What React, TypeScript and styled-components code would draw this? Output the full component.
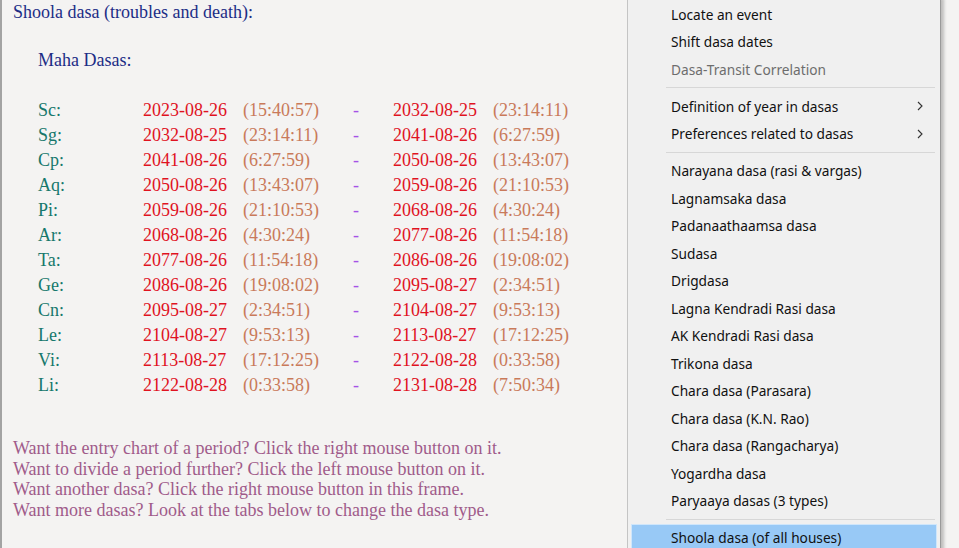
import * as React from "react";
import styled, { createGlobalStyle } from "styled-components";

const GlobalStyle = createGlobalStyle`
  html, body {
    margin: 0;
    padding: 0;
    width: 959px;
    height: 548px;
    overflow: hidden;
    background: #f4f3f2;
  }
`;

const Page = styled.div`
  position: relative;
  width: 959px;
  height: 548px;
  box-sizing: border-box;
  border-left: 2px solid #a3a3a3;
  background: #f4f3f2;
  font-family: "Liberation Serif", "Times New Roman", serif;
  overflow: hidden;
`;

const Title = styled.div`
  padding-left: 11px;
  font-size: 18px;
  line-height: 24px;
  color: #1c2d86;
`;

const SubTitle = styled.div`
  padding-left: 36px;
  margin-top: 24px;
  font-size: 18px;
  line-height: 24px;
  color: #1c2d86;
`;

const DasaGrid = styled.div`
  display: grid;
  grid-template-columns: 105px 100px 110px 40px 100px auto;
  margin-top: 26px;
  padding-left: 36px;
  font-size: 18px;
  line-height: 25px;
`;

const Cell = styled.span<{ $kind: "sign" | "date" | "time" | "dash" }>`
  white-space: nowrap;
  color: ${(p) =>
    p.$kind === "sign"
      ? "#16786c"
      : p.$kind === "date"
      ? "#e0121f"
      : p.$kind === "time"
      ? "#c97a5a"
      : "#a552e6"};
`;

const Hints = styled.div`
  margin-top: 40px;
  padding-left: 11px;
  font-size: 18px;
  line-height: 20.7px;
  color: #a05b8a;
`;

const Menu = styled.div`
  position: absolute;
  top: -5.5px;
  left: 625px;
  width: 314px;
  box-sizing: border-box;
  padding: 5px 3px 4px 3px;
  background: #f0f0f0;
  border: 1px solid #c4c4c4;
  border-right: 1px solid #9a9a9a;
  box-shadow: 3px 3px 3px rgba(0, 0, 0, 0.22);
  font-family: "Noto Sans", "Open Sans", sans-serif;
  font-size: 13.7px;
`;

const Item = styled.div<{ $disabled?: boolean; $active?: boolean }>`
  display: flex;
  align-items: center;
  justify-content: space-between;
  height: 27.5px;
  box-sizing: border-box;
  padding: 0 13px 0 39px;
  color: ${(p) => (p.$disabled ? "#6d6d6d" : "#111111")};
  background: ${(p) => (p.$active ? "#98c9f6" : "transparent")};
  border: 1px solid ${(p) => (p.$active ? "#cfe6fb" : "transparent")};
  white-space: nowrap;
`;

const Separator = styled.div`
  height: 1px;
  margin: 4px 2px 4.5px 35px;
  background: #d7d7d7;
`;

const Chevron = () => (
  <svg width="6" height="10" viewBox="0 0 6 10">
    <path d="M1 1 L5 5 L1 9" fill="none" stroke="#333" strokeWidth="1.1" />
  </svg>
);

const rows: [string, string, string, string, string][] = [
  ["Sc:", "2023-08-26", "(15:40:57)", "2032-08-25", "(23:14:11)"],
  ["Sg:", "2032-08-25", "(23:14:11)", "2041-08-26", "(6:27:59)"],
  ["Cp:", "2041-08-26", "(6:27:59)", "2050-08-26", "(13:43:07)"],
  ["Aq:", "2050-08-26", "(13:43:07)", "2059-08-26", "(21:10:53)"],
  ["Pi:", "2059-08-26", "(21:10:53)", "2068-08-26", "(4:30:24)"],
  ["Ar:", "2068-08-26", "(4:30:24)", "2077-08-26", "(11:54:18)"],
  ["Ta:", "2077-08-26", "(11:54:18)", "2086-08-26", "(19:08:02)"],
  ["Ge:", "2086-08-26", "(19:08:02)", "2095-08-27", "(2:34:51)"],
  ["Cn:", "2095-08-27", "(2:34:51)", "2104-08-27", "(9:53:13)"],
  ["Le:", "2104-08-27", "(9:53:13)", "2113-08-27", "(17:12:25)"],
  ["Vi:", "2113-08-27", "(17:12:25)", "2122-08-28", "(0:33:58)"],
  ["Li:", "2122-08-28", "(0:33:58)", "2131-08-28", "(7:50:34)"],
];

const hints = [
  "Want the entry chart of a period? Click the right mouse button on it.",
  "Want to divide a period further? Click the left mouse button on it.",
  "Want another dasa? Click the right mouse button in this frame.",
  "Want more dasas? Look at the tabs below to change the dasa type.",
];

type MenuEntry =
  | { sep: true }
  | { label: string; disabled?: boolean; sub?: boolean; active?: boolean };

const menu: MenuEntry[] = [
  { label: "Locate an event" },
  { label: "Shift dasa dates" },
  { label: "Dasa-Transit Correlation", disabled: true },
  { sep: true },
  { label: "Definition of year in dasas", sub: true },
  { label: "Preferences related to dasas", sub: true },
  { sep: true },
  { label: "Narayana dasa (rasi & vargas)" },
  { label: "Lagnamsaka dasa" },
  { label: "Padanaathaamsa dasa" },
  { label: "Sudasa" },
  { label: "Drigdasa" },
  { label: "Lagna Kendradi Rasi dasa" },
  { label: "AK Kendradi Rasi dasa" },
  { label: "Trikona dasa" },
  { label: "Chara dasa (Parasara)" },
  { label: "Chara dasa (K.N. Rao)" },
  { label: "Chara dasa (Rangacharya)" },
  { label: "Yogardha dasa" },
  { label: "Paryaaya dasas (3 types)" },
  { sep: true },
  { label: "Shoola dasa (of all houses)", active: true },
];

export default function App() {
  return (
    <>
      <GlobalStyle />
      <Page>
        <Title>Shoola dasa (troubles and death):</Title>
        <SubTitle>Maha Dasas:</SubTitle>
        <DasaGrid>
          {rows.map((r) => (
            <React.Fragment key={r[0]}>
              <Cell $kind="sign">{r[0]}</Cell>
              <Cell $kind="date">{r[1]}</Cell>
              <Cell $kind="time">{r[2]}</Cell>
              <Cell $kind="dash">-</Cell>
              <Cell $kind="date">{r[3]}</Cell>
              <Cell $kind="time">{r[4]}</Cell>
            </React.Fragment>
          ))}
        </DasaGrid>
        <Hints>
          {hints.map((h) => (
            <div key={h}>{h}</div>
          ))}
        </Hints>
        <Menu>
          {menu.map((m, i) =>
            "sep" in m ? (
              <Separator key={i} />
            ) : (
              <Item key={i} $disabled={m.disabled} $active={m.active}>
                <span>{m.label}</span>
                {m.sub && <Chevron />}
              </Item>
            )
          )}
        </Menu>
      </Page>
    </>
  );
}
